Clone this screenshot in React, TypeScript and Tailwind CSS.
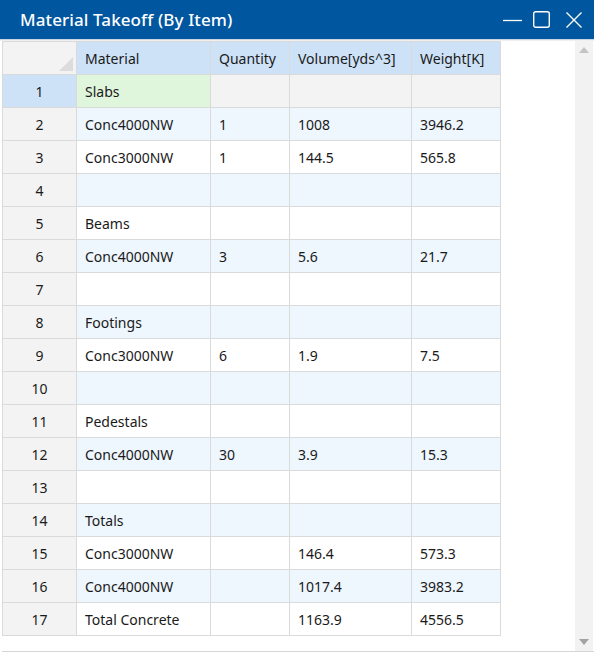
import React from "react";

const rows: [string, string, string, string][] = [
  ["Slabs", "", "", ""],
  ["Conc4000NW", "1", "1008", "3946.2"],
  ["Conc3000NW", "1", "144.5", "565.8"],
  ["", "", "", ""],
  ["Beams", "", "", ""],
  ["Conc4000NW", "3", "5.6", "21.7"],
  ["", "", "", ""],
  ["Footings", "", "", ""],
  ["Conc3000NW", "6", "1.9", "7.5"],
  ["", "", "", ""],
  ["Pedestals", "", "", ""],
  ["Conc4000NW", "30", "3.9", "15.3"],
  ["", "", "", ""],
  ["Totals", "", "", ""],
  ["Conc3000NW", "", "146.4", "573.3"],
  ["Conc4000NW", "", "1017.4", "3983.2"],
  ["Total Concrete", "", "1163.9", "4556.5"],
];

const widths = ["w-[134px]", "w-[79px]", "w-[122px]", "w-[89px]"];

export default function App() {
  return (
    <div
      className="flex h-[655px] w-[594px] flex-col overflow-hidden bg-white text-[14px] text-[#1a1a1a]"
      style={{ fontFamily: '"Noto Sans", "Open Sans", sans-serif' }}
    >
      <div className="flex h-[39px] shrink-0 items-center bg-[#00569f] pl-[20px] pr-[12px] text-white">
        <span className="flex-1 text-[17px] font-medium tracking-[0.1px]">Material Takeoff (By Item)</span>
        <div className="flex items-center">
          <svg width="19" height="18" viewBox="0 0 19 18">
            <path d="M0 9.5h19" stroke="white" strokeWidth="1.3" />
          </svg>
          <svg width="17" height="17" viewBox="0 0 17 17" className="ml-[11px]">
            <rect x="0.7" y="0.7" width="15.6" height="15.6" rx="2" fill="none" stroke="white" strokeWidth="1.4" />
          </svg>
          <svg width="16" height="16" viewBox="0 0 16 16" className="ml-[16px]">
            <path d="M0.5 0.5l15 15M15.5 0.5l-15 15" stroke="white" strokeWidth="1.4" />
          </svg>
        </div>
      </div>
      <div className="h-[2px] shrink-0 border-t border-[#c9d3de] bg-[#eef0f2]" />
      <div className="flex min-h-0 flex-1">
        <div className="flex-1 pl-[2px]">
          <table className="border-collapse">
            <thead>
              <tr className="h-[33px]">
                <th className="relative w-[74px] border border-[#dadada] bg-[#f3f3f3] p-0">
                  <svg width="14" height="14" viewBox="0 0 14 14" className="absolute bottom-[3px] right-[3px]">
                    <path d="M14 0V14H0Z" fill="#dcdcdc" />
                  </svg>
                </th>
                {["Material", "Quantity", "Volume[yds^3]", "Weight[K]"].map((h, i) => (
                  <th
                    key={h}
                    className={`${widths[i]} border border-[#dadada] bg-[#cde2f7] px-[8px] text-left font-normal`}
                  >
                    {h}
                  </th>
                ))}
              </tr>
            </thead>
            <tbody>
              {rows.map((r, idx) => {
                const first = idx === 0;
                const bg = first ? "bg-[#f3f3f3]" : idx % 2 === 1 ? "bg-[#eef6fe]" : "bg-white";
                return (
                  <tr key={idx} className="h-[33px]">
                    <td
                      className={`border border-[#dadada] text-center ${first ? "bg-[#cde2f7]" : "bg-[#f3f3f3]"}`}
                    >
                      {idx + 1}
                    </td>
                    {r.map((c, i) => (
                      <td
                        key={i}
                        className={`border border-[#dadada] px-[8px] ${
                          first && i === 0 ? "bg-[#dff5dc]" : bg
                        }`}
                      >
                        {c}
                      </td>
                    ))}
                  </tr>
                );
              })}
            </tbody>
          </table>
        </div>
        <div className="mr-[1px] flex w-[18px] flex-col items-center justify-between bg-[#f2f2f2] py-[6px]">
          <svg width="10" height="6" viewBox="0 0 10 6">
            <path d="M0 6L5 0L10 6Z" fill="#c4c4c4" />
          </svg>
          <svg width="10" height="6" viewBox="0 0 10 6">
            <path d="M0 0L5 6L10 0Z" fill="#a3a3a3" />
          </svg>
        </div>
      </div>
      <div className="ml-[2px] h-[4px] shrink-0 border-t border-[#d6d6d6] bg-white" />
    </div>
  );
}
